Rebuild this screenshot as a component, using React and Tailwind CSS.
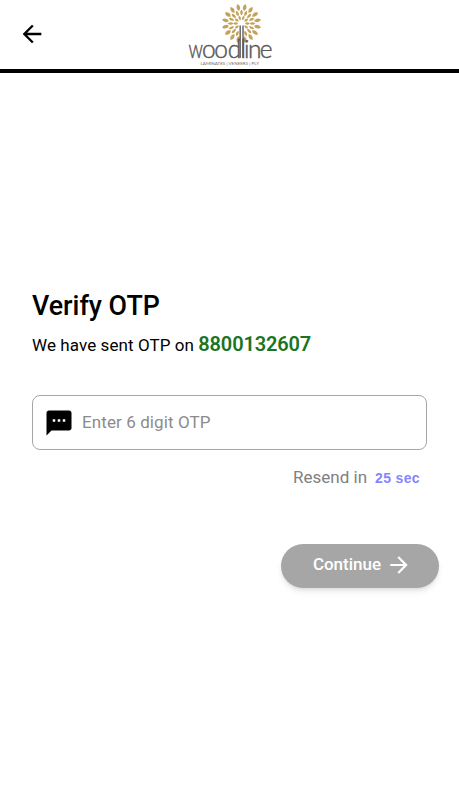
import { useState } from 'react';
import { MdArrowBack, MdArrowForward, MdSms } from 'react-icons/md';

// rings of leaves around the trunk, angles are measured from the top
const rings = [
  { count: 16, offset: 11.25, radius: 16.3, rx: 1.85, ry: 3.6, skip: [] },
  { count: 16, offset: 0, radius: 10.9, rx: 1.35, ry: 3, skip: [8] },
  { count: 10, offset: 18, radius: 5.8, rx: 1.2, ry: 2.4, skip: [4, 5] },
];

function Logo() {
  return (
    <svg width="100" height="68" viewBox="0 0 100 68" role="img" aria-label="woodline">
      <g fill="#c5a25a">
        {rings.map((ring, r) =>
          Array.from({ length: ring.count }, (_, i) =>
            ring.skip.includes(i) ? null : (
              <path
                key={`${r}-${i}`}
                d={`M0 ${-ring.ry}Q${ring.rx * 2} 0 0 ${ring.ry}Q${-ring.rx * 2} 0 0 ${-ring.ry}Z`}
                transform={`translate(61.5 23.5) rotate(${ring.offset + (i * 360) / ring.count}) translate(0 ${-ring.radius})`}
              />
            )
          )
        )}
      </g>
      <path d="M60.2 25.5V58M63 25.5V58" stroke="#6b6b6d" strokeWidth="1.5" />
      <g
        fill="#58585a"
        stroke="#58585a"
        strokeWidth="0.45"
        fontFamily="Lato, sans-serif"
        fontSize="24.5"
        fontWeight="300"
      >
        <text x="8.4" y="58" textLength="14.4" lengthAdjust="spacingAndGlyphs">w</text>
        <text x="22 34.2 47.8 60.6 64 68 79.8" y="58">oodline</text>
      </g>
      <text
        x="20.5"
        y="64.6"
        fill="#6b6b6d"
        fontFamily="Lato, sans-serif"
        fontSize="4"
        textLength="58.5"
        lengthAdjust="spacingAndGlyphs"
      >
        LAMINATES | VENEERS | PLY
      </text>
    </svg>
  );
}

function App() {
  const [otp, setOtp] = useState('');

  return (
    <div className="h-screen bg-white font-['Roboto',sans-serif] text-black overflow-hidden">
      <header className="h-[73px] border-b-4 border-black grid grid-cols-[1fr_100px_1fr] items-start">
        <button aria-label="Back" className="w-7 h-7 ml-[18px] mt-5">
          <MdArrowBack size={28} />
        </button>
        <Logo />
      </header>

      <main className="px-8 pt-[217px]">
        <h1 className="text-[26.8px] leading-8 font-medium">Verify OTP</h1>
        <p className="mt-2 text-[17px] leading-7 tracking-[0.08px]">
          We have sent OTP on{' '}
          <span className="text-xl font-semibold tracking-[-0.15px] text-[#1b751e]">8800132607</span>
        </p>

        <label className="mt-9 h-[55px] flex items-center gap-2 pl-[11px] pr-3 border border-[#a6a6a6] rounded-lg">
          <MdSms size={30} className="shrink-0" />
          <input
            type="text"
            inputMode="numeric"
            maxLength={6}
            placeholder="Enter 6 digit OTP"
            value={otp}
            onChange={(e) => setOtp(e.target.value)}
            className="flex-1 min-w-0 outline-none text-[17px] tracking-[0.1px] placeholder:text-[#8b8b8b]"
          />
        </label>

        <div className="mt-[13px] pr-[7px] flex items-center justify-end gap-2 leading-7">
          <span className="text-[17px] text-[#808080]">Resend in</span>
          <span className="mt-px text-sm font-bold tracking-[0.35px] text-[#8585ff] font-['Liberation_Sans',sans-serif]">
            25 sec
          </span>
        </div>
      </main>

      <div className="mt-[53px] pr-5 flex justify-end">
        <button className="w-[158px] h-11 pl-[5px] pb-0.5 flex items-center justify-center gap-[5px] rounded-full bg-[#a6a6a6] text-white text-[17px] font-medium shadow-md">
          Continue
          <MdArrowForward size={26} />
        </button>
      </div>
    </div>
  );
}

export default App;
